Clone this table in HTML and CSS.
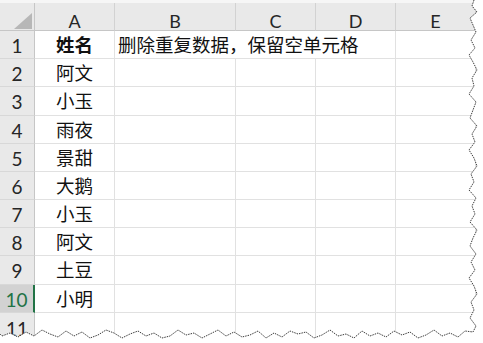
FILE: index.html
```html
<!DOCTYPE html>
<html lang="zh-CN">
<head>
<meta charset="utf-8">
<link rel="stylesheet" href="styles.css">
</head>
<body>
<div class="sheet">
  <div class="topstrip"></div>
  <div class="grid">
    <div class="corner"><svg width="34" height="28" viewBox="0 0 34 28"><polygon points="14,26 32,26 32,10" fill="#b7b7b7"/></svg></div>
    <div class="colh">A</div>
    <div class="colh">B</div>
    <div class="colh">C</div>
    <div class="colh">D</div>
    <div class="colh">E</div>
    <div class="colh colf"></div>

    <div class="rowh">1</div>
    <div class="cell name bold">姓名</div>
    <div class="cell span3">删除重复数据，保留空单元格</div>
    <div class="cell"></div><div class="cell colf"></div>

    <div class="rowh">2</div><div class="cell name">阿文</div><div class="cell"></div><div class="cell"></div><div class="cell"></div><div class="cell"></div><div class="cell colf"></div>
    <div class="rowh">3</div><div class="cell name">小玉</div><div class="cell"></div><div class="cell"></div><div class="cell"></div><div class="cell"></div><div class="cell colf"></div>
    <div class="rowh">4</div><div class="cell name">雨夜</div><div class="cell"></div><div class="cell"></div><div class="cell"></div><div class="cell"></div><div class="cell colf"></div>
    <div class="rowh">5</div><div class="cell name">景甜</div><div class="cell"></div><div class="cell"></div><div class="cell"></div><div class="cell"></div><div class="cell colf"></div>
    <div class="rowh">6</div><div class="cell name">大鹅</div><div class="cell"></div><div class="cell"></div><div class="cell"></div><div class="cell"></div><div class="cell colf"></div>
    <div class="rowh">7</div><div class="cell name">小玉</div><div class="cell"></div><div class="cell"></div><div class="cell"></div><div class="cell"></div><div class="cell colf"></div>
    <div class="rowh">8</div><div class="cell name">阿文</div><div class="cell"></div><div class="cell"></div><div class="cell"></div><div class="cell"></div><div class="cell colf"></div>
    <div class="rowh">9</div><div class="cell name">土豆</div><div class="cell"></div><div class="cell"></div><div class="cell"></div><div class="cell"></div><div class="cell colf"></div>
    <div class="rowh sel">10</div><div class="cell name">小明</div><div class="cell"></div><div class="cell"></div><div class="cell"></div><div class="cell"></div><div class="cell colf"></div>
    <div class="rowh">11</div><div class="cell"></div><div class="cell"></div><div class="cell"></div><div class="cell"></div><div class="cell"></div><div class="cell colf"></div>
  </div>
  <svg class="torn" width="483" height="343" viewBox="0 0 483 343">
    <polygon fill="#ffffff" points="474,0 472,6 477,12 470,18 473,25 476,32 471,40 475,48 469,55 473,62 477,70 472,78 474,86 469,94 476,102 473,110 470,118 477,126 472,134 475,142 469,150 474,158 477,166 471,174 474,182 469,190 476,198 472,206 475,214 470,222 477,230 473,238 470,246 476,254 471,262 475,270 469,278 474,286 477,294 471,302 474,310 470,318 476,326 473,332 465,331 458,337 450,333 442,336 434,330 426,335 418,338 410,332 402,335 394,331 386,337 378,333 370,336 362,331 354,338 346,334 338,336 330,330 322,335 314,338 306,332 298,334 290,331 282,337 274,333 266,338 258,331 250,335 242,337 234,332 226,336 218,330 210,334 202,338 194,333 186,335 178,330 170,336 162,338 154,333 146,336 138,331 130,334 122,338 114,333 106,330 98,335 90,338 82,332 74,336 66,331 58,337 50,334 42,330 34,336 26,332 18,337 10,333 2,336 0,334 0,343 483,343 483,0"/>
    <polyline fill="none" stroke="#3c3c3c" stroke-width="1" stroke-dasharray="1.5 1" points="474,0 472,6 477,12 470,18 473,25 476,32 471,40 475,48 469,55 473,62 477,70 472,78 474,86 469,94 476,102 473,110 470,118 477,126 472,134 475,142 469,150 474,158 477,166 471,174 474,182 469,190 476,198 472,206 475,214 470,222 477,230 473,238 470,246 476,254 471,262 475,270 469,278 474,286 477,294 471,302 474,310 470,318 476,326 473,332 465,331 458,337 450,333 442,336 434,330 426,335 418,338 410,332 402,335 394,331 386,337 378,333 370,336 362,331 354,338 346,334 338,336 330,330 322,335 314,338 306,332 298,334 290,331 282,337 274,333 266,338 258,331 250,335 242,337 234,332 226,336 218,330 210,334 202,338 194,333 186,335 178,330 170,336 162,338 154,333 146,336 138,331 130,334 122,338 114,333 106,330 98,335 90,338 82,332 74,336 66,331 58,337 50,334 42,330 34,336 26,332 18,337 10,333 2,336 0,334"/>
  </svg>
</div>
</body>
</html>
```
FILE: styles.css
```css
html, body {
  margin: 0;
  padding: 0;
  background: #ffffff;
}
.sheet {
  position: relative;
  width: 483px;
  height: 343px;
  overflow: hidden;
  background: #ffffff;
}
.topstrip {
  height: 3px;
  background: #f6f6f6;
}
.grid {
  display: grid;
  grid-template-columns: 35px 80px 121px 80px 80px 80px 40px;
  grid-template-rows: 28px 28px 28px 29px 28px 28px 28px 28px 28px 29px 28px 30px;
}
.grid > div {
  box-sizing: border-box;
}
.corner {
  background: #e9e9e9;
  border-right: 1px solid #c6c6c6;
  border-bottom: 1px solid #c6c6c6;
}
.corner svg {
  display: block;
}
.colh {
  background: #e9e9e9;
  border-right: 1px solid #d2d2d2;
  border-bottom: 1px solid #c6c6c6;
  font-family: "Lato", "Liberation Sans", sans-serif;
  font-size: 18px;
  color: #262626;
  text-align: center;
  line-height: 18px;
  padding-top: 9px;
}
.rowh {
  background: #e9e9e9;
  border-right: 1px solid #c6c6c6;
  border-bottom: 1px solid #d8d8d8;
  font-family: "Lato", "Liberation Sans", sans-serif;
  font-size: 19px;
  line-height: 20px;
  color: #262626;
  display: flex;
  align-items: center;
  justify-content: center;
  padding-top: 2px;
}
.rowh.sel {
  background: #d2d2d2;
  color: #217346;
  border-right: 2px solid #217346;
}
.cell {
  border-right: 1px solid #e1e1e1;
  border-bottom: 1px solid #e1e1e1;
  font-family: "Noto Sans CJK SC", "Noto Sans", sans-serif;
  font-size: 18.5px;
  color: #111111;
  display: flex;
  align-items: center;
  white-space: nowrap;
  line-height: 1;
  padding-bottom: 1px;
}
.cell.name {
  justify-content: center;
}
.cell.bold {
  font-weight: bold;
}
.cell.span3 {
  grid-column: span 3;
  padding-left: 3px;
}
.colf {
  border-right: none;
}
.torn {
  position: absolute;
  left: 0;
  top: 0;
}
```
